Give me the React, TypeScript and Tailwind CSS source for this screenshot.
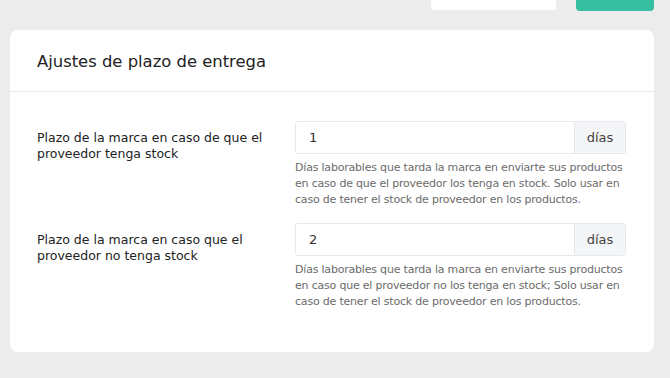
import React from "react";

const rows = [
  {
    label: "Plazo de la marca en caso de que el proveedor tenga stock",
    value: "1",
    help: "Días laborables que tarda la marca en enviarte sus productos en caso de que el proveedor los tenga en stock. Solo usar en caso de tener el stock de proveedor en los productos.",
  },
  {
    label: "Plazo de la marca en caso que el proveedor no tenga stock",
    value: "2",
    help: "Días laborables que tarda la marca en enviarte sus productos en caso que el proveedor no los tenga en stock; Solo usar en caso de tener el stock de proveedor en los productos.",
  },
];

export default function App() {
  return (
    <div
      className="w-[670px] h-[378px] bg-[#ececec] overflow-hidden"
      style={{ fontFamily: '"DejaVu Sans", Verdana, sans-serif' }}
    >
      <div className="flex items-start h-[30px]">
        <div className="ml-[431px] w-[125px] h-[10px] bg-white rounded-b-[3px]" />
        <div className="ml-[20px] w-[78px] h-[11px] bg-[#35bfa0] rounded-b-[4px]" />
      </div>
      <div className="ml-[10px] w-[644px] bg-white rounded-[8px]">
        <div className="h-[62px] border-b border-[#e9ebee] flex items-center pl-[27px] pt-[4px]">
          <h2 className="text-[16.4px] text-[#222] font-normal">Ajustes de plazo de entrega</h2>
        </div>
        <div className="pt-[29px] pb-[42px] pl-[27px] pr-[28px] flex flex-col gap-[15px]">
          {rows.map((r) => (
            <div key={r.value} className="grid grid-cols-[258px_331px]">
              <div className="pt-[9px] pr-[14px] text-[12.5px] leading-[16px] text-[#222]">{r.label}</div>
              <div>
                <div className="flex h-[33px] border border-[#e6e8eb] rounded-[3px] overflow-hidden">
                  <div className="flex-1 flex items-center pl-[13px] text-[13px] text-[#333]">{r.value}</div>
                  <div className="w-[51px] flex items-center justify-center bg-[#f4f5f7] border-l border-[#e6e8eb] text-[13px] text-[#444]">
                    días
                  </div>
                </div>
                <p className="mt-[6px] text-[11px] tracking-[-0.2px] leading-[16px] text-[#6b6b6b]">{r.help}</p>
              </div>
            </div>
          ))}
        </div>
      </div>
    </div>
  );
}
